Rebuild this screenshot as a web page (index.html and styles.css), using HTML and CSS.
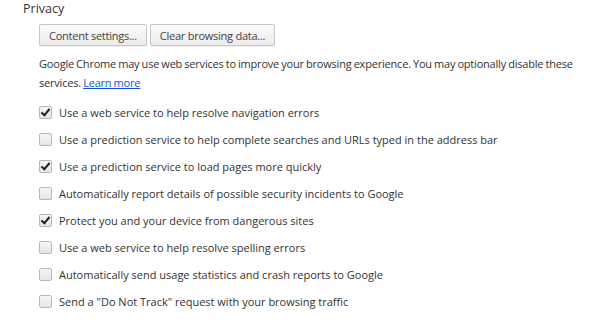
FILE: index.html
```html
<!DOCTYPE html>
<html>
<head>
<meta charset="utf-8">
<link rel="stylesheet" href="styles.css">
</head>
<body>
<section class="privacy">
  <h2 class="title">Privacy</h2>
  <div class="content">
    <div class="buttons">
      <button class="btn">Content settings...</button>
      <button class="btn">Clear browsing data...</button>
    </div>
    <p class="desc">Google Chrome may use web services to improve your browsing experience. You may optionally disable these services. <a href="#" class="link">Learn more</a></p>
    <ul class="options">
      <li class="option"><span class="box checked"></span>Use a web service to help resolve navigation errors</li>
      <li class="option"><span class="box"></span>Use a prediction service to help complete searches and URLs typed in the address bar</li>
      <li class="option"><span class="box checked"></span>Use a prediction service to load pages more quickly</li>
      <li class="option"><span class="box"></span>Automatically report details of possible security incidents to Google</li>
      <li class="option"><span class="box checked"></span>Protect you and your device from dangerous sites</li>
      <li class="option"><span class="box"></span>Use a web service to help resolve spelling errors</li>
      <li class="option"><span class="box"></span>Automatically send usage statistics and crash reports to Google</li>
      <li class="option"><span class="box"></span>Send a "Do Not Track" request with your browsing traffic</li>
    </ul>
  </div>
</section>
</body>
</html>
```
FILE: styles.css
```css
html, body {
  margin: 0;
  padding: 0;
  background: #fff;
}
body {
  font-family: "Open Sans", "Noto Sans", sans-serif;
  color: #333;
  font-size: 11px;
}
.privacy {
  padding: 0 0 0 23px;
}
.title {
  margin: 0;
  font-size: 12.5px;
  font-weight: normal;
  line-height: 18px;
  color: #333;
}
.content {
  padding-left: 16px;
}
.buttons {
  display: flex;
  gap: 3px;
  margin-top: 6px;
}
.btn {
  font-family: inherit;
  font-size: 11px;
  letter-spacing: -0.25px;
  color: #444;
  height: 22px;
  padding: 0 9px;
  border: 1px solid #c8c8c8;
  border-radius: 2px;
  background: linear-gradient(#fafafa, #ececec);
  box-shadow: 0 1px 0 rgba(0,0,0,0.06);
}
.desc {
  margin: 8px 0 0;
  line-height: 19px;
  width: 552px;
  color: #333;
  letter-spacing: -0.2px;
  word-spacing: -0.5px;
}
.link {
  color: #15c;
  text-decoration: underline;
}
.options {
  list-style: none;
  margin: 7px 0 0;
  padding: 0;
}
.option {
  display: flex;
  align-items: center;
  height: 27px;
  color: #333;
}
.box {
  width: 11px;
  height: 11px;
  border: 1px solid #b8b8b8;
  border-radius: 2px;
  background: linear-gradient(#f6f6f6, #e6e6e6);
  margin-right: 7px;
  position: relative;
  flex: none;
}
.box.checked::after {
  content: "";
  position: absolute;
  left: 3px;
  top: 0px;
  width: 3px;
  height: 7px;
  border: solid #222;
  border-width: 0 2px 2px 0;
  transform: rotate(40deg);
}
```
